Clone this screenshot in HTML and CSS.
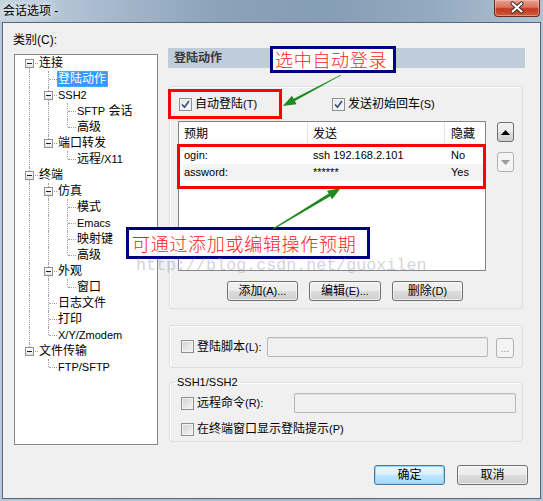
FILE: index.html
```html
<!DOCTYPE html>
<html>
<head>
<meta charset="utf-8">
<link rel="stylesheet" href="styles.css">
</head>
<body>
<div class="win">
  <div class="titlebar">
    <span class="title">会话选项 -</span>
    <div class="close">
      <svg width="46" height="17" viewBox="0 0 46 17">
        <path d="M18.5 4.5 L27.5 12.5 M27.5 4.5 L18.5 12.5" stroke="#3a2a28" stroke-width="4.2" stroke-linecap="round"/>
        <path d="M18.5 4.5 L27.5 12.5 M27.5 4.5 L18.5 12.5" stroke="#ffffff" stroke-width="2.2" stroke-linecap="round"/>
      </svg>
    </div>
  </div>
  <div class="client">
    <div class="left">
      <div class="cat">类别(C):</div>
      <div class="tree">
        <div class="row"><i class="c f"><b class="exp"></b></i><span class="lb">连接</span></div>
        <div class="row"><i class="c v"></i><i class="c t"></i><span class="lb sel">登陆动作</span></div>
        <div class="row"><i class="c v"></i><i class="c t"><b class="exp"></b></i><span class="lb en">SSH2</span></div>
        <div class="row"><i class="c v"></i><i class="c v"></i><i class="c t"></i><span class="lb"><span class="en">SFTP</span> 会话</span></div>
        <div class="row"><i class="c v"></i><i class="c v"></i><i class="c l"></i><span class="lb">高级</span></div>
        <div class="row"><i class="c v"></i><i class="c l"><b class="exp"></b></i><span class="lb">端口转发</span></div>
        <div class="row"><i class="c v"></i><i class="c"></i><i class="c l"></i><span class="lb">远程<span class="en">/X11</span></span></div>
        <div class="row"><i class="c t"><b class="exp"></b></i><span class="lb">终端</span></div>
        <div class="row"><i class="c v"></i><i class="c t"><b class="exp"></b></i><span class="lb">仿真</span></div>
        <div class="row"><i class="c v"></i><i class="c v"></i><i class="c t"></i><span class="lb">模式</span></div>
        <div class="row"><i class="c v"></i><i class="c v"></i><i class="c t"></i><span class="lb en">Emacs</span></div>
        <div class="row"><i class="c v"></i><i class="c v"></i><i class="c t"></i><span class="lb">映射键</span></div>
        <div class="row"><i class="c v"></i><i class="c v"></i><i class="c l"></i><span class="lb">高级</span></div>
        <div class="row"><i class="c v"></i><i class="c t"><b class="exp"></b></i><span class="lb">外观</span></div>
        <div class="row"><i class="c v"></i><i class="c v"></i><i class="c l"></i><span class="lb">窗口</span></div>
        <div class="row"><i class="c v"></i><i class="c t"></i><span class="lb">日志文件</span></div>
        <div class="row"><i class="c v"></i><i class="c t"></i><span class="lb">打印</span></div>
        <div class="row"><i class="c v"></i><i class="c l"></i><span class="lb en">X/Y/Zmodem</span></div>
        <div class="row"><i class="c l"><b class="exp"></b></i><span class="lb">文件传输</span></div>
        <div class="row"><i class="c"></i><i class="c l"></i><span class="lb en">FTP/SFTP</span></div>
      </div>
    </div>

    <div class="right">
      <div class="hdr">登陆动作</div>

      <div class="grp g1">
        <div class="checks">
          <label class="chk w1"><span class="cb on"><svg width="9" height="9" viewBox="0 0 9 9"><path d="M1 4.5 L3.5 7.2 L8 1" fill="none" stroke="#3b4f8c" stroke-width="1.7"/></svg></span>自动登陆<span class="en">(T)</span></label>
          <label class="chk"><span class="cb on"><svg width="9" height="9" viewBox="0 0 9 9"><path d="M1 4.5 L3.5 7.2 L8 1" fill="none" stroke="#3b4f8c" stroke-width="1.7"/></svg></span>发送初始回车<span class="en">(S)</span></label>
        </div>
        <div class="listrow">
          <div class="list">
            <div class="lhead">
              <div class="hc h1">预期</div>
              <div class="hc h2">发送</div>
              <div class="hc h3">隐藏</div>
            </div>
            <div class="lrow">
              <div class="lc c1">ogin:</div>
              <div class="lc c2">ssh 192.168.2.101</div>
              <div class="lc c3">No</div>
            </div>
            <div class="lrow alt">
              <div class="lc c1">assword:</div>
              <div class="lc c2">******</div>
              <div class="lc c3">Yes</div>
            </div>
          </div>
          <div class="updown">
            <div class="ud up"><svg width="9" height="5" viewBox="0 0 9 5"><polygon points="0,5 9,5 4.5,0" fill="#000"/></svg></div>
            <div class="ud down"><svg width="9" height="5" viewBox="0 0 9 5"><polygon points="0,0 9,0 4.5,5" fill="#9a9a9a"/></svg></div>
          </div>
        </div>
        <div class="btns">
          <div class="btn b1">添加<span class="en">(A)...</span></div>
          <div class="btn b2">编辑<span class="en">(E)...</span></div>
          <div class="btn b3">删除<span class="en">(D)</span></div>
        </div>
      </div>

      <div class="grp g2">
        <label class="chk w2"><span class="cb"></span>登陆脚本<span class="en">(L):</span></label>
        <div class="input i1"></div>
        <div class="dots">...</div>
      </div>

      <fieldset class="grp g3">
        <legend class="en">SSH1/SSH2</legend>
        <div class="r1">
          <label class="chk w3"><span class="cb"></span>远程命令<span class="en">(R):</span></label>
          <div class="input i2"></div>
        </div>
        <div class="r2">
          <label class="chk"><span class="cb"></span>在终端窗口显示登陆提示<span class="en">(P)</span></label>
        </div>
      </fieldset>

      <div class="footer">
        <div class="btn ok">确定</div>
        <div class="btn">取消</div>
      </div>
    </div>

    <div class="redbox rb1"></div>
    <div class="redbox rb2"></div>
    <div class="note n1">选中自动登录</div>
    <div class="note n2">可通过添加或编辑操作预期</div>
    <svg class="arrows" width="543" height="501" viewBox="0 0 543 501">
      <g transform="translate(341 75) rotate(151.9)">
        <polygon points="0,-0.4 53,-1.3 53,-4.8 66,0 53,4.8 53,1.3 0,0.4" fill="#1f8a1f"/>
      </g>
      <g transform="translate(273 229) rotate(-31.1)">
        <polygon points="0,-0.5 66,-1.5 66,-5 79,0 66,5 66,1.5 0,0.5" fill="#1f8a1f"/>
      </g>
    </svg>
    <div class="wm">http://blog.csdn.net/guoxilen</div>
  </div>
</div>
</body>
</html>
```
FILE: styles.css
```css
html, body {
  margin: 0;
  padding: 0;
}
body {
  font-family: "Liberation Sans", "Noto Sans CJK SC", sans-serif;
  font-size: 12px;
  color: #000;
  background: #b0c2d4;
}
.en {
  font-size: 11px;
}
.win {
  width: 543px;
  height: 501px;
  background: linear-gradient(to right, #b7c8d9, #a6b9cd 50%, #b3c4d5);
  display: flex;
  flex-direction: column;
  overflow: hidden;
}
.titlebar {
  height: 22px;
  display: flex;
  justify-content: space-between;
  align-items: flex-start;
  background: linear-gradient(to right, #c3d1df 0%, #a9bccf 18%, #8ba2b9 40%, #859db5 60%, #94aac0 80%, #b1c2d3 100%);
}
.title {
  padding-left: 3px;
  line-height: 22px;
  font-size: 12px;
  color: #000;
  text-shadow: 0 0 6px #e8eef4, 0 0 10px #e8eef4, 0 0 12px #dfe7ef;
}
.close {
  width: 46px;
  height: 17px;
  margin-right: 3px;
  box-sizing: border-box;
  border: 1px solid #6b2b22;
  border-top: none;
  border-radius: 0 0 4px 4px;
  background: linear-gradient(#e7a190 0%, #d8735f 45%, #c2391f 55%, #cf5a3b 100%);
  box-shadow: inset 0 0 0 1px rgba(255, 210, 200, 0.45);
}
.close svg {
  display: block;
  margin: -1px 0 0 -1px;
}
.client {
  position: relative;
  margin: 0 2px;
  width: 539px;
  height: 477px;
  box-sizing: border-box;
  border: 1px solid #56687b;
  background: #f0f0f0;
  display: flex;
  align-items: flex-start;
  padding-left: 11px;
}
.left {
  padding-top: 9px;
}
.cat {
  line-height: 16px;
  margin-left: -1px;
}
.tree {
  margin-top: 6px;
  width: 144px;
  height: 391px;
  box-sizing: border-box;
  border: 1px solid #828790;
  background: #fff;
  padding-left: 5px;
}
.row {
  display: flex;
  height: 16px;
  line-height: 14px;
}
.c {
  position: relative;
  width: 19px;
  height: 16px;
  flex: none;
}
.c.v::before, .c.t::before, .c.l::before, .c.f::before {
  content: "";
  position: absolute;
  left: 9px;
  top: 0;
  bottom: 0;
  border-left: 1px dotted #a0a0a0;
}
.c.l::before {
  bottom: 8px;
}
.c.f::before {
  top: 8px;
}
.c.t::after, .c.l::after, .c.f::after {
  content: "";
  position: absolute;
  left: 10px;
  right: 1px;
  top: 8px;
  border-top: 1px dotted #a0a0a0;
}
.exp {
  position: absolute;
  left: 5px;
  top: 4px;
  width: 9px;
  height: 9px;
  box-sizing: border-box;
  border: 1px solid #919191;
  background: linear-gradient(#ffffff, #e6e6e6);
  z-index: 2;
}
.exp::after {
  content: "";
  position: absolute;
  left: 1px;
  top: 3px;
  width: 5px;
  height: 1px;
  background: #1a1a40;
}
.lb {
  margin-left: -1px;
  padding: 0 1px 0 0;
  border: 1px solid transparent;
  white-space: nowrap;
  height: 14px;
}
.lb.sel {
  background: #3399ff;
  color: #fff;
  border: 1px dotted #c9a455;
}
.right {
  margin-left: 10px;
  margin-top: 25px;
  width: 372px;
}
.hdr {
  width: 357px;
  height: 20px;
  line-height: 20px;
  background: #bfcddb;
  padding-left: 6px;
  box-sizing: border-box;
  font-weight: bold;
  color: #3a3a3a;
}
.grp {
  margin-left: 1px;
  width: 354px;
  box-sizing: border-box;
  border: 1px solid #d5dfe5;
  border-radius: 3px;
  box-shadow: inset 1px 1px 0 #fff;
}
.g1 {
  margin-top: 18px;
  height: 223px;
}
.checks {
  display: flex;
  margin-top: 9px;
  padding-left: 9px;
  height: 16px;
}
.chk {
  display: flex;
  align-items: center;
  height: 16px;
  line-height: 16px;
  white-space: nowrap;
}
.w1 {
  width: 153px;
}
.cb {
  width: 13px;
  height: 13px;
  box-sizing: border-box;
  border: 1px solid #8e8f8f;
  margin-right: 3px;
  flex: none;
  background: linear-gradient(135deg, #cdd1d6, #f6f6f6);
  box-shadow: inset 0 0 0 1px #f2f2f2;
  display: flex;
  align-items: center;
  justify-content: center;
}
.cb.on {
  background: linear-gradient(135deg, #e3e6ea, #fbfbfb);
}
.cb svg {
  display: block;
}
.listrow {
  display: flex;
  margin-top: 9px;
  padding-left: 8px;
}
.list {
  width: 308px;
  height: 150px;
  box-sizing: border-box;
  border: 1px solid #828790;
  background: #fff;
}
.lhead {
  display: flex;
  height: 25px;
  line-height: 25px;
  background: linear-gradient(#ffffff, #ffffff 55%, #f5f6f7);
}
.hc {
  box-sizing: border-box;
  border-right: 1px solid #e3e5e7;
}
.h1 {
  width: 129px;
  padding-left: 5px;
}
.h2 {
  width: 137px;
  padding-left: 5px;
}
.h3 {
  flex: 1;
  padding-left: 6px;
  border-right: none;
}
.lrow {
  display: flex;
  height: 17px;
  line-height: 17px;
  margin: 0 2px 0 4px;
  font-size: 11px;
}
.lrow.alt {
  background: #f3f3f3;
}
.lc.c1 {
  width: 125px;
  padding-left: 1px;
  box-sizing: border-box;
}
.lc.c2 {
  width: 137px;
  padding-left: 5px;
  box-sizing: border-box;
}
.lc.c3 {
  padding-left: 6px;
}
.updown {
  margin-left: 11px;
  display: flex;
  flex-direction: column;
}
.ud {
  width: 17px;
  height: 20px;
  box-sizing: border-box;
  border-radius: 3px;
  display: flex;
  align-items: center;
  justify-content: center;
}
.ud.up {
  margin-top: 1px;
  border: 1px solid #707070;
  background: linear-gradient(#f2f2f2, #ebebeb 50%, #dddddd 51%, #cfcfcf);
}
.ud.down {
  margin-top: 10px;
  border: 1px solid #adb2b5;
  background: #f4f4f4;
}
.btns {
  display: flex;
  gap: 11px;
  margin-top: 10px;
  padding-left: 57px;
}
.btn {
  width: 71px;
  height: 20px;
  box-sizing: border-box;
  border: 1px solid #707070;
  border-radius: 3px;
  background: linear-gradient(#f2f2f2, #ebebeb 50%, #dddddd 51%, #cfcfcf);
  box-shadow: inset 0 0 0 1px rgba(255, 255, 255, 0.6);
  text-align: center;
  line-height: 18px;
  white-space: nowrap;
}
.btn.b2 {
  width: 72px;
}
.g2 {
  margin-top: 16px;
  height: 43px;
  display: flex;
  align-items: center;
  padding-left: 11px;
}
.w2 {
  width: 86px;
}
.input {
  height: 20px;
  box-sizing: border-box;
  border: 1px solid #b8b8b8;
  border-radius: 2px;
  background: #f0f0f0;
  box-shadow: inset 0 1px 0 #e2e2e2;
}
.i1 {
  width: 221px;
}
.dots {
  margin-left: 8px;
  width: 18px;
  height: 20px;
  margin-top: 2px;
  box-sizing: border-box;
  border: 1px solid #adb2b5;
  border-radius: 3px;
  background: #f4f4f4;
  color: #8d8d8d;
  font-size: 10px;
  line-height: 20px;
  text-align: center;
}
fieldset.g3 {
  margin: 7px 0 0 1px;
  padding: 0 0 4px 11px;
  min-width: 0;
  border-radius: 4px;
}
.g3 legend {
  margin-left: -6px;
  padding: 0 2px;
  line-height: 14px;
  height: 14px;
}
.r1 {
  display: flex;
  align-items: center;
  height: 20px;
  margin-top: 4px;
}
.w3 {
  width: 113px;
}
.i2 {
  width: 222px;
}
.r2 {
  margin-top: 8px;
}
.footer {
  display: flex;
  gap: 12px;
  margin-top: 23px;
  padding-left: 206px;
}
.btn.ok {
  border-color: #3c7fb1;
  background: linear-gradient(#eaf6fd, #d9f0fc 50%, #bee6fd 51%, #a7d9f5);
  box-shadow: inset 0 0 0 1px #9ad2f0;
}
.redbox {
  position: absolute;
  border: 3px solid #ff0000;
  box-sizing: border-box;
}
.rb1 {
  left: 165px;
  top: 66px;
  width: 114px;
  height: 30px;
}
.rb2 {
  left: 174px;
  top: 121px;
  width: 309px;
  height: 45px;
}
.note {
  position: absolute;
  box-sizing: border-box;
  border: 3px solid #000080;
  background: #fff;
  color: #ff1a1a;
  font-family: "Noto Sans CJK SC", sans-serif;
  font-weight: 300;
  font-size: 18px;
  letter-spacing: 0.7px;
  white-space: nowrap;
}
.n1 {
  left: 267px;
  top: 23px;
  width: 126px;
  height: 27px;
  line-height: 21px;
  padding-left: 2px;
}
.n2 {
  left: 123px;
  top: 204px;
  width: 244px;
  height: 32px;
  line-height: 26px;
  padding-left: 3px;
}
.arrows {
  position: absolute;
  left: -3px;
  top: -23px;
  pointer-events: none;
}
.wm {
  position: absolute;
  left: 133px;
  top: 233px;
  font-family: "Liberation Mono", monospace;
  font-size: 16.7px;
  line-height: 20px;
  color: rgba(150, 150, 150, 0.42);
  white-space: nowrap;
}
```
